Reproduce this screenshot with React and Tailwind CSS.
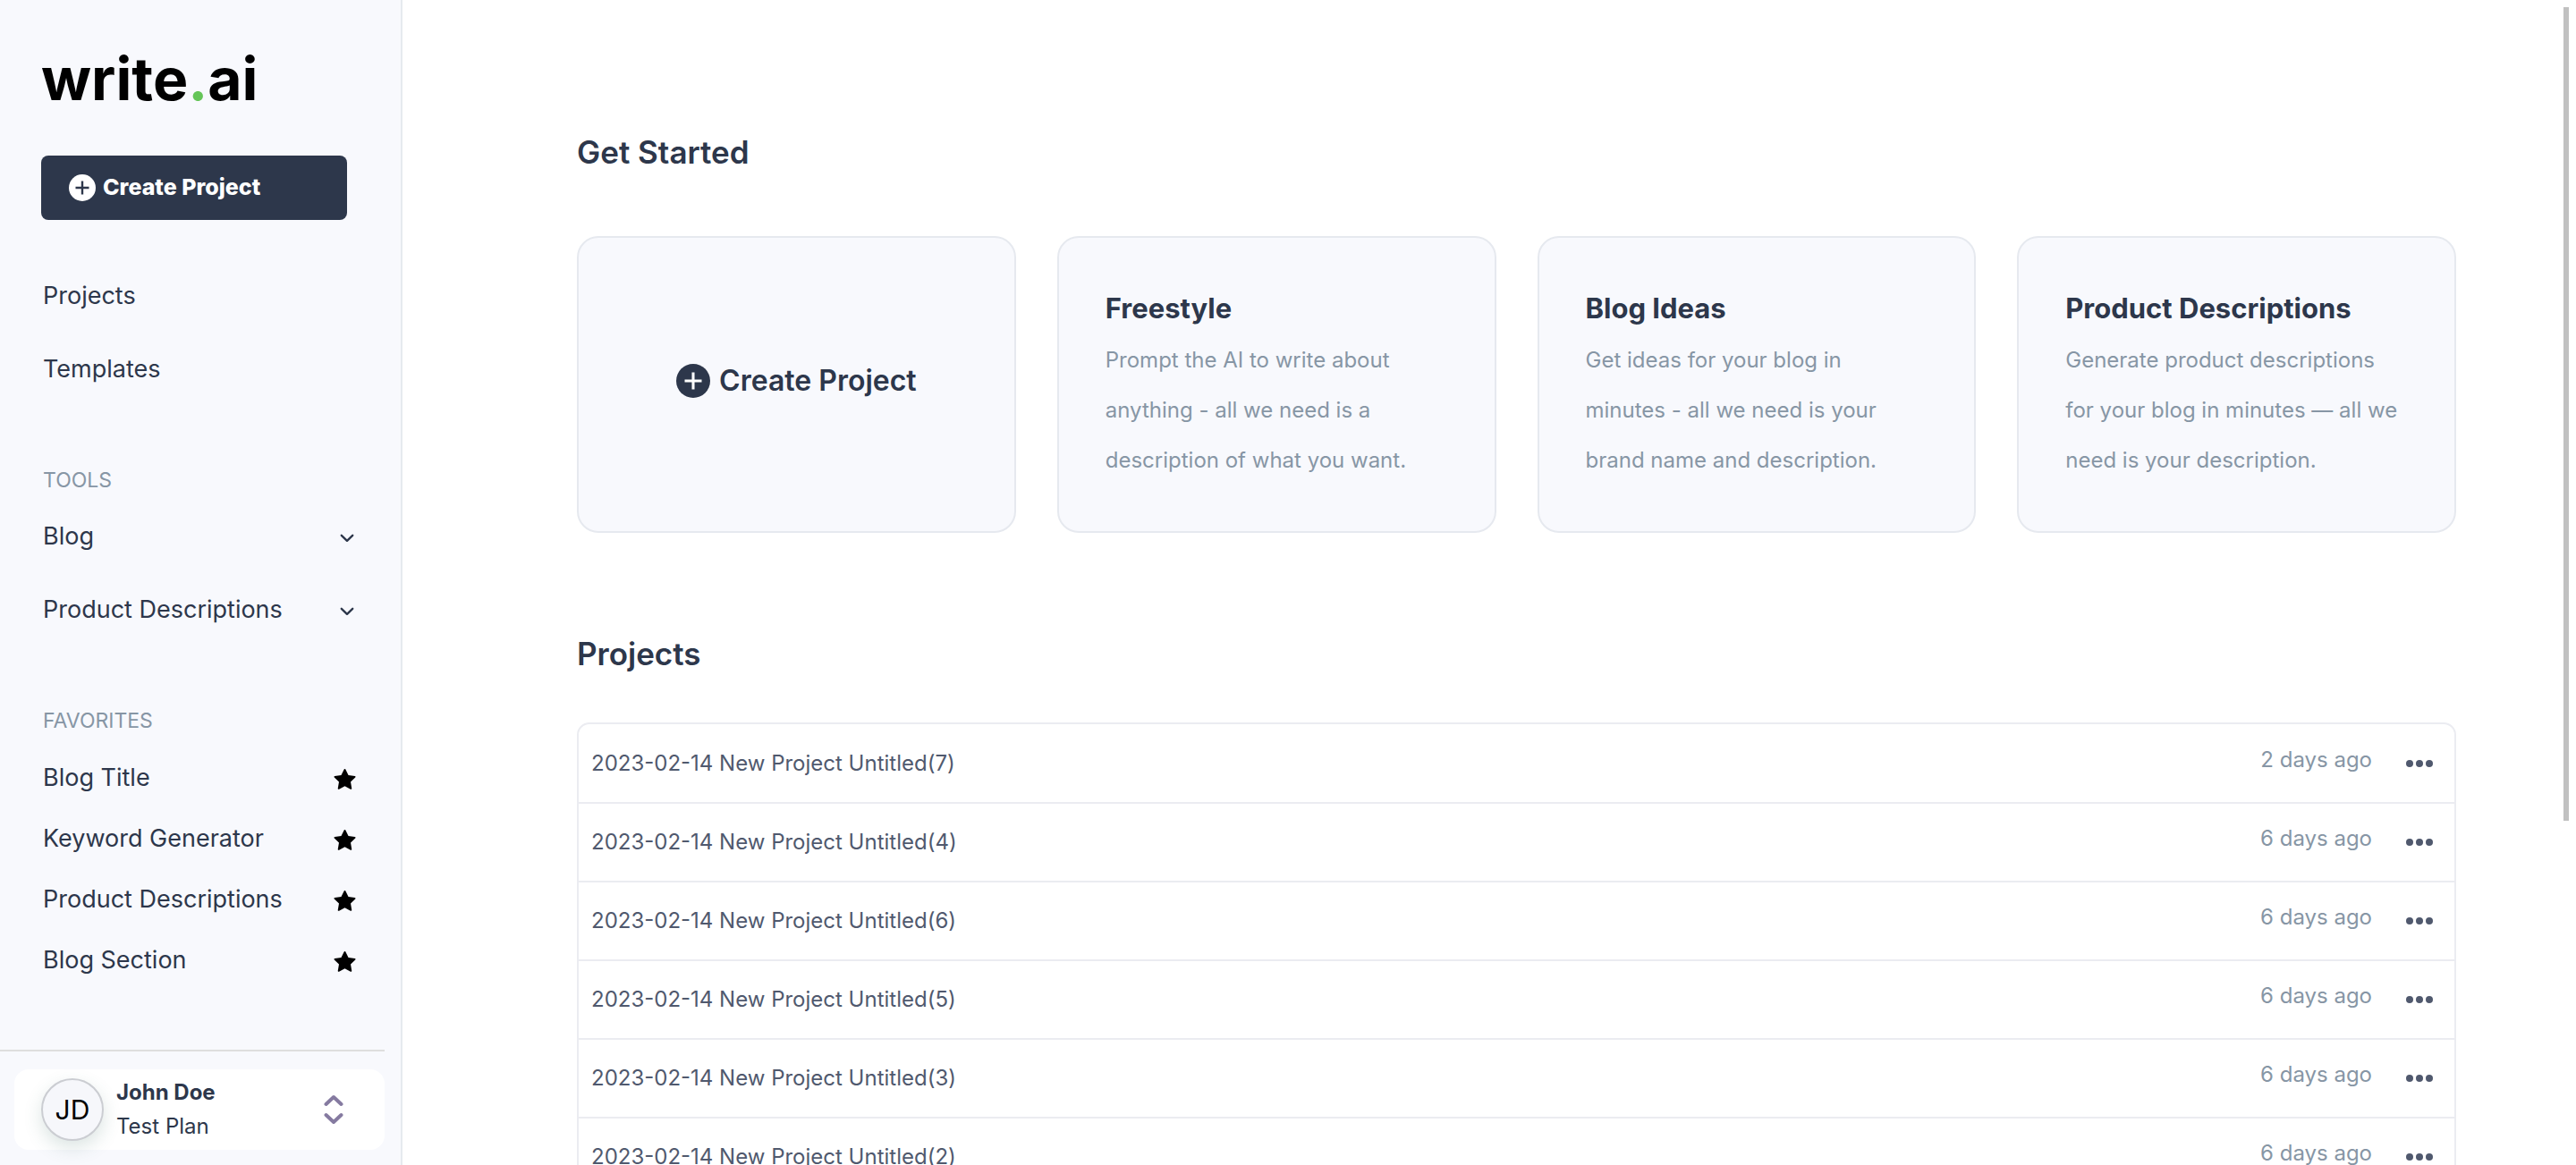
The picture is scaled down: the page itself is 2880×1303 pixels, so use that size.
import React from "react";
import { AiFillStar } from "react-icons/ai";

const cards = [
  {
    title: "Freestyle",
    lines: ["Prompt the AI to write about", "anything - all we need is a", "description of what you want."],
  },
  {
    title: "Blog Ideas",
    lines: ["Get ideas for your blog in", "minutes - all we need is your", "brand name and description."],
  },
  {
    title: "Product Descriptions",
    lines: ["Generate product descriptions", "for your blog in minutes — all we", "need is your description."],
  },
];

const projects = [
  ["2023-02-14 New Project Untitled(7)", "2 days ago"],
  ["2023-02-14 New Project Untitled(4)", "6 days ago"],
  ["2023-02-14 New Project Untitled(6)", "6 days ago"],
  ["2023-02-14 New Project Untitled(5)", "6 days ago"],
  ["2023-02-14 New Project Untitled(3)", "6 days ago"],
  ["2023-02-14 New Project Untitled(2)", "6 days ago"],
];

const favorites = ["Blog Title", "Keyword Generator", "Product Descriptions", "Blog Section"];

function PlusCircle({ className, plus }) {
  return (
    <svg viewBox="0 0 30 30" className={className} aria-hidden="true">
      <circle cx="15" cy="15" r="15" fill="currentColor" />
      <path d="M15 7.5v15M7.5 15h15" stroke={plus} strokeWidth="2.4" fill="none" />
    </svg>
  );
}

function Chevron() {
  return (
    <svg viewBox="0 0 16 10" className="mt-1 mr-1 h-[10px] w-4" aria-hidden="true">
      <path d="M1.8 1.8 8 7.8l6.2-6" fill="none" stroke="currentColor" strokeWidth="2.4" strokeLinecap="round" strokeLinejoin="round" />
    </svg>
  );
}

function Sidebar() {
  return (
    <aside className="flex h-full w-[450px] shrink-0 flex-col border-r-2 border-[#e6eaef] bg-[#f8f9fd]">
      <a href="#home" className="mt-[46px] mb-[2px] ml-[46px] block text-[66px] leading-[84px] font-bold text-black">
        write<span className="text-[#65c558]">.</span>ai
      </a>
      <button className="mt-[42px] mr-[60px] ml-[46px] flex h-[72px] items-center gap-2 rounded-lg bg-[#2d374b] px-[31px] text-[25px] font-extrabold text-white">
        <PlusCircle className="size-[30px]" plus="#2d374b" />
        Create Project
      </button>

      <nav className="mt-11 flex flex-col px-12 text-[27px] leading-9">
        <a href="#projects" className="py-[23px]">Projects</a>
        <a href="#templates" className="py-[23px]">Templates</a>

        <h2 className="mt-[67px] mb-[6px] text-[23px] leading-8 text-[#8796a5]">TOOLS</h2>
        {["Blog", "Product Descriptions"].map((name) => (
          <button key={name} className="flex items-center justify-between py-[23px] text-left">
            {name}
            <Chevron />
          </button>
        ))}

        <h2 className="mt-[67px] mb-[14px] text-[23px] leading-8 text-[#8796a5]">FAVORITES</h2>
        {favorites.map((name) => (
          <a key={name} href="#favorite" className="flex items-center justify-between py-4">
            {name}
            <AiFillStar className="mt-1 size-[29px] text-black" />
          </a>
        ))}
      </nav>

      <div className="mt-auto mr-[18px] border-t-2 border-[#dedede] pt-5 pb-[17px]">
        <button className="ml-4 flex h-[90px] w-[414px] items-center rounded-2xl bg-white pr-[46px] pl-[30px] text-left">
          <span className="flex size-[70px] items-center justify-center rounded-full border-2 border-[#cbcdd2] bg-[#f6f7fb] text-[30px] text-black shadow-[0_8px_20px_rgba(60,110,100,0.18)]">
            JD
          </span>
          <span className="ml-[14px] flex flex-1 flex-col text-[24px] leading-[38px]">
            <strong className="font-bold">John Doe</strong>
            <span>Test Plan</span>
          </span>
          <svg viewBox="0 0 22 34" className="h-[34px] w-[22px]" aria-hidden="true">
            <path d="M2.500 11 11 3l8.500 8M2.500 23 11 31l8.500-8" fill="none" stroke="#857aa0" strokeWidth="4" strokeLinecap="round" strokeLinejoin="round" />
          </svg>
        </button>
      </div>
    </aside>
  );
}

export default function App() {
  return (
    <div className="flex h-screen overflow-hidden bg-white font-['Inter',sans-serif] text-[#2d374b]">
      <Sidebar />
      <main className="relative min-w-0 flex-1 overflow-hidden pt-[146px] pr-[134px] pl-[195px]">
        <h1 className="text-[35px] leading-[48px] font-semibold">Get Started</h1>
        <section className="mt-[70px] grid grid-cols-4 gap-[46px]">
          <button className="flex items-center justify-center gap-[10px] rounded-[24px] border-2 border-[#e6e9ef] bg-[#f8f9fd] pb-2 text-[32px] font-semibold">
            <PlusCircle className="size-[38px]" plus="#ffffff" />
            Create Project
          </button>
          {cards.map((card) => (
            <a key={card.title} href="#create" className="block rounded-[24px] border-2 border-[#e6e9ef] bg-[#f8f9fd] px-[52px] pt-[57px] pb-[51px]">
              <h2 className="text-[31px] leading-[44px] font-bold">{card.title}</h2>
              <p className="mt-2 text-[24px] leading-[56px] whitespace-nowrap text-[#8796a5]">
                {card.lines.map((line) => (
                  <span key={line} className="block">{line}</span>
                ))}
              </p>
            </a>
          ))}
        </section>

        <h1 className="mt-[111px] text-[35px] leading-[48px] font-semibold">Projects</h1>
        <div className="mt-[53px] rounded-t-[14px] border-2 border-[#ebecf1]">
          <table className="w-full border-collapse text-[24px] leading-9 text-[#50596e]">
            <tbody>
              {projects.map(([name, date]) => (
                <tr key={name} className="h-[88px] border-b-2 border-[#ebecf1]">
                  <td className="pl-[14px]">{name}</td>
                  <td className="w-[200px] pr-[38px] pb-2 text-right whitespace-nowrap text-[#8796a5]">{date}</td>
                  <td className="w-[54px]">
                    <button aria-label="Project options" className="block">
                      <svg viewBox="0 0 30 8" className="h-2 w-[30px] fill-current" aria-hidden="true">
                        <circle cx="4" cy="4" r="4" />
                        <circle cx="15" cy="4" r="4" />
                        <circle cx="26" cy="4" r="4" />
                      </svg>
                    </button>
                  </td>
                </tr>
              ))}
            </tbody>
          </table>
        </div>
        <div className="absolute top-2 right-2 h-[910px] w-[6px] bg-[#c1c1c1]" />
      </main>
    </div>
  );
}
